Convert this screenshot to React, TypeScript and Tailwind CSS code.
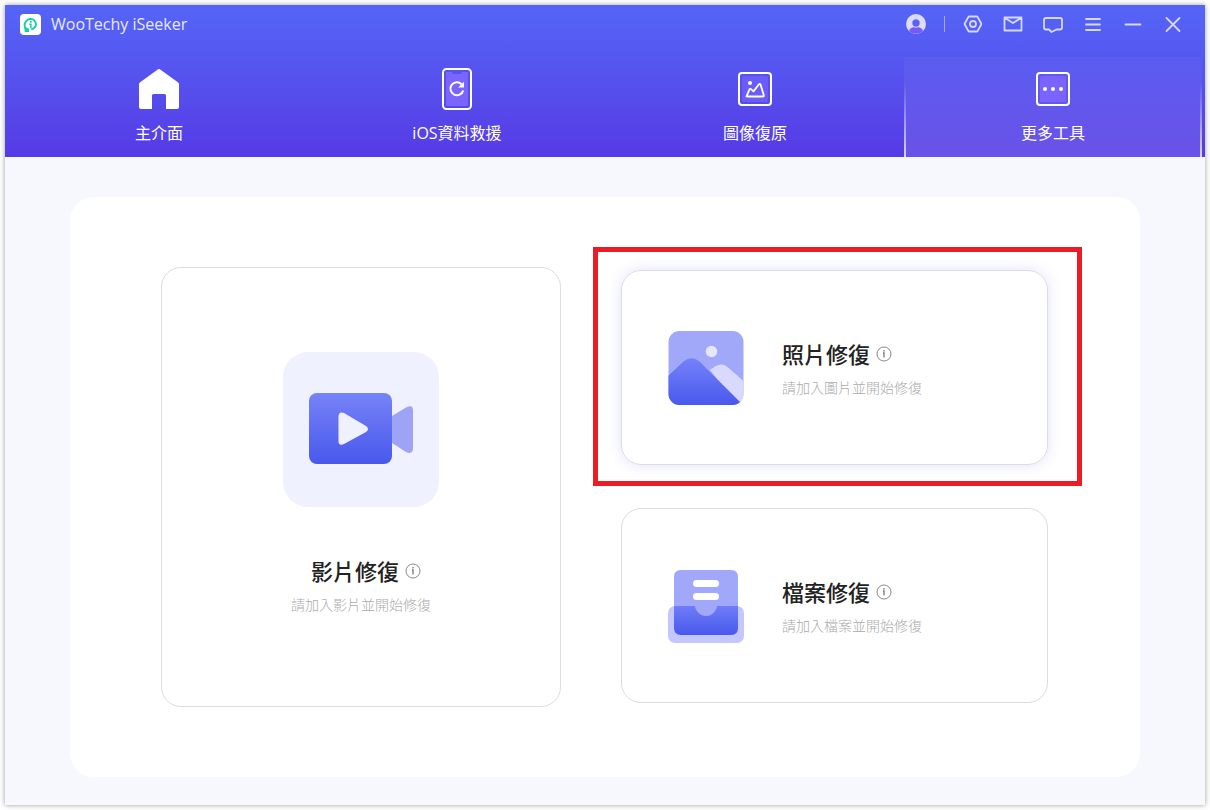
import React, { useState } from 'react';

interface Tab {
    id: string;
    label: string;
    icon: React.ReactNode;
}

interface ToolTextProps {
    title: string;
    description: string;
    centered?: boolean;
}

const LogoIcon = () => (
    <svg viewBox="0 0 21 21" className="w-[21px] h-[21px]" aria-hidden="true">
        <rect width="21" height="21" rx="4" fill="#fff" />
        <path d="M6.200 15.500C4.400 13 4.200 9.500 6 7.300 8 4.700 12 4.200 14.200 6.300c2.200 2.200 2.200 5.700.2 7.500-.9.900-2 1.300-3.200 1.400" fill="none" stroke="#16cfa6" strokeWidth="1.900" />
        <path d="M4.300 12.500l4.700 2.300v3.200l-4.200.2z" fill="#16cfa6" />
        <circle cx="10.900" cy="7.800" r="1" fill="#16cfa6" />
        <path d="M9.200 10.200h1.700v4" fill="none" stroke="#16cfa6" strokeWidth="1.500" />
    </svg>
);

const HomeIcon = () => (
    <svg viewBox="0 0 40 40" className="w-10 h-10" aria-hidden="true">
        <path d="M18.400.7Q20-.6 21.600.7L39.200 13.600Q40 14.200 40 15.200V38q0 2-2 2H27V26.500q0-1.500-1.500-1.500h-11q-1.500 0-1.500 1.500V40H2q-2 0-2-2V15.200Q0 14.200.8 13.600z" fill="#fff" />
    </svg>
);

const PhoneIcon = () => (
    <svg viewBox="0 0 30 42" className="w-[30px] h-[42px]" aria-hidden="true">
        <rect x="1" y="1" width="28" height="40" rx="3.500" fill="none" stroke="#fff" strokeWidth="2" />
        <path d="M5 4h5l1 2h8l1-2h5q1 0 1 1v32q0 1-1 1H5q-1 0-1-1V5q0-1 1-1z" fill="#7a66ff" />
        <path d="M19.600 16.200A6.500 6.500 0 1 0 21.200 22.400" fill="none" stroke="#fff" strokeWidth="2" />
        <path d="M22 13.800v5.700h-5.800z" fill="#fff" />
    </svg>
);

const ImageIcon = () => (
    <svg viewBox="0 0 34 34" className="w-[34px] h-[34px]" aria-hidden="true">
        <rect x="1" y="1" width="32" height="32" rx="3" fill="none" stroke="#fff" strokeWidth="2" />
        <rect x="4" y="4" width="26" height="26" rx="1.500" fill="#6c5cfb" />
        <circle cx="12" cy="11" r="2" fill="#fff" />
        <path d="M8.500 24.300L11.500 17.300Q12 16.300 13 17.200L15.500 19.400 20.800 12.500Q21.900 11.300 22.600 12.800L25.800 23.200Q26 24.500 24.800 24.500H9z" fill="none" stroke="#fff" strokeWidth="1.800" strokeLinejoin="round" />
    </svg>
);

const MoreIcon = () => (
    <svg viewBox="0 0 34 34" className="w-[34px] h-[34px]" aria-hidden="true">
        <rect x="1" y="1" width="32" height="32" rx="3" fill="none" stroke="#fff" strokeWidth="2" />
        <rect x="4" y="4" width="26" height="26" rx="1.500" fill="#7b63ff" />
        <circle cx="9" cy="17" r="2" fill="#fff" />
        <circle cx="17" cy="17" r="2" fill="#fff" />
        <circle cx="25" cy="17" r="2" fill="#fff" />
    </svg>
);

const VideoArt = () => (
    <svg viewBox="0 0 156 155" className="w-[156px] h-[155px]" aria-hidden="true">
        <defs>
            <linearGradient id="video" x1="0" y1="0" x2="0" y2="1">
                <stop offset="0" stopColor="#7783f7" />
                <stop offset="1" stopColor="#4858ec" />
            </linearGradient>
        </defs>
        <rect width="156" height="155" rx="25" fill="#eff1ff" />
        <path d="M109 64l14-8.500q7-3.500 7 3V96q0 7-7 4l-14-9z" fill="#9da4f6" />
        <rect x="26" y="41" width="83" height="71" rx="8" fill="url(#video)" />
        <path d="M55.500 65q0-6 5.500-4l22 13q4 3 0 6L61 92q-5.500 2.500-5.500-3z" fill="#eff1ff" />
    </svg>
);

const PhotoArt = () => (
    <svg viewBox="0 0 76 76" className="w-[76px] h-[76px]" aria-hidden="true">
        <defs>
            <linearGradient id="hill" x1="0" y1="0" x2="0" y2="1">
                <stop offset="0" stopColor="#7582fb" />
                <stop offset="1" stopColor="#4858ec" />
            </linearGradient>
            <clipPath id="frame">
                <rect x="0.500" y="1" width="75" height="74" rx="11" />
            </clipPath>
        </defs>
        <g clipPath="url(#frame)">
            <rect width="76" height="76" fill="#a2a8f9" />
            <path d="M42 40l5-3.500q7-4 12.500.5L76 51.500V76H70z" fill="#d9d9ff" />
            <path d="M0 46l15.500-14.500q8-6.500 16 0L73 73v3H0z" fill="url(#hill)" />
            <circle cx="43.500" cy="21.500" r="5.800" fill="#e6e6ff" />
        </g>
    </svg>
);

const FileArt = () => (
    <svg viewBox="0 0 76 76" className="w-[76px] h-[76px]" aria-hidden="true">
        <defs>
            <linearGradient id="tray" x1="0" y1="0" x2="0" y2="1">
                <stop offset="0" stopColor="#707df8" />
                <stop offset="1" stopColor="#4858ec" />
            </linearGradient>
        </defs>
        <rect x="0" y="38" width="76" height="37" rx="7" fill="#c3c7fe" />
        <path d="M6 38V9q0-7 7-7h50q7 0 7 7v29z" fill="#a2a8f9" />
        <path d="M6 38h64v22q0 7-7 7H13q-7 0-7-7z" fill="url(#tray)" />
        <path d="M27 37h22c0 6-5 11-11 11S27 43 27 37z" fill="#a2a8f9" />
        <rect x="25" y="12" width="26" height="7" rx="3.500" fill="#fff" />
        <rect x="25" y="25" width="26" height="7" rx="3.500" fill="#fff" />
    </svg>
);

const tabs: Tab[] = [
    { id: 'home', label: '主介面', icon: <HomeIcon /> },
    { id: 'ios', label: 'iOS資料救援', icon: <PhoneIcon /> },
    { id: 'image', label: '圖像復原', icon: <ImageIcon /> },
    { id: 'more', label: '更多工具', icon: <MoreIcon /> },
];

const windowActions = [
    {
        label: '設定',
        icon: (
            <>
                <path d="M6.300 2.500h7.400q.6 0 .9.500l3.500 6.200q.4.800 0 1.600L14.600 17q-.3.500-.9.500H6.300q-.6 0-.9-.5L1.900 10.800q-.4-.8 0-1.600L5.400 3q.3-.5.900-.5z" />
                <circle cx="10" cy="10" r="3" />
            </>
        ),
    },
    { label: '郵件', icon: <path d="M1.500 3.500h17v13h-17zM2 4l8 5 8-5" strokeLinejoin="round" /> },
    { label: '意見回饋', icon: <path d="M3 4h14q2 0 2 2v7.500q0 2-2 2h-3.500L8.500 18 6 15.500H3q-2 0-2-2V6q0-2 2-2z" strokeLinejoin="round" /> },
    { label: '選單', icon: <path d="M3 5h14M3 10.500h14M3 16h14" strokeLinecap="round" /> },
    { label: '最小化', icon: <path d="M2.500 10.500h15" strokeLinecap="round" /> },
    { label: '關閉', icon: <path d="M3.500 4l13 13M16.500 4l-13 13" strokeLinecap="round" /> },
];

const ToolText: React.FC<ToolTextProps> = ({ title, description, centered = false }) => (
    <div className={centered ? 'flex flex-col items-center' : 'flex flex-col items-start'}>
        <div className={`flex items-center gap-1.5 ${centered ? 'pl-2.5' : ''}`}>
            <h2 className="text-[22px] leading-8 font-medium text-[#222]">{title}</h2>
            <button type="button" aria-label={`${title}說明`} className="cursor-pointer">
                <svg viewBox="0 0 16 16" className="w-4 h-4" aria-hidden="true">
                    <circle cx="8" cy="8" r="7" fill="none" stroke="#888" strokeWidth="1" />
                    <path d="M8 4v1.500M7 7h1v4.500" fill="none" stroke="#777" strokeWidth="1.300" />
                </svg>
            </button>
        </div>
        <p className="mt-2 text-sm leading-5 font-light text-[#aaa]">{description}</p>
    </div>
);

const App: React.FC = () => {
    const [activeTab, setActiveTab] = useState('more');

    return (
        <div className="min-h-screen flex bg-white p-[5px] font-['Open_Sans','Noto_Sans_CJK_TC',sans-serif]">
            <div className="flex-1 flex flex-col bg-[#f7f8fe] shadow-[0_0_5px_rgba(0,0,0,0.4)]">
                <header className="bg-gradient-to-b from-[#5465f6] to-[#563ae5] text-white">
                    <div className="flex items-center justify-between h-[38px] pl-[15px] pr-[22px]">
                        <div className="flex items-center gap-2.5">
                            <LogoIcon />
                            <h1 className="text-base leading-6 text-[#e8e9ff]">WooTechy iSeeker</h1>
                        </div>
                        <div className="flex items-center">
                            <button type="button" aria-label="帳戶" className="mr-[18px] cursor-pointer">
                                <svg viewBox="0 0 20 20" className="w-5 h-5" aria-hidden="true">
                                    <circle cx="10" cy="10" r="10" fill="#dcdcff" />
                                    <path d="M3 17q1-4 7-4t7 4a10 10 0 0 1-14 0z" fill="#7659fb" />
                                    <circle cx="10" cy="9" r="4.200" fill="#5b61f5" stroke="#dcdcff" strokeWidth="1" />
                                </svg>
                            </button>
                            <span className="w-px h-4 mr-[18px] bg-[#a3a7fa]" />
                            <div className="flex items-center gap-5">
                                {windowActions.map((action) => (
                                    <button key={action.label} type="button" aria-label={action.label} className="cursor-pointer">
                                        <svg viewBox="0 0 20 20" className="w-5 h-5" fill="none" stroke="#d5d7ff" strokeWidth="1.800" aria-hidden="true">
                                            {action.icon}
                                        </svg>
                                    </button>
                                ))}
                            </div>
                        </div>
                    </div>

                    <nav className="grid grid-cols-4 pl-[5px] pr-[3px] pt-3.5">
                        {tabs.map((tab) => (
                            <button
                                key={tab.id}
                                type="button"
                                onClick={() => setActiveTab(tab.id)}
                                className={`flex h-[100px] cursor-pointer ${activeTab === tab.id ? 'bg-gradient-to-b from-white/3 to-white/12' : ''}`}
                            >
                                {activeTab === tab.id && <span className="w-0.5 h-full bg-gradient-to-b from-transparent from-25% to-white/75" />}
                                <span className="flex-1 flex flex-col items-center pt-2.5">
                                    <span className="flex items-center justify-center h-11">{tab.icon}</span>
                                    <span className="mt-2.5 text-base leading-6">{tab.label}</span>
                                </span>
                                {activeTab === tab.id && <span className="w-0.5 h-full bg-gradient-to-b from-transparent from-25% to-white/75" />}
                            </button>
                        ))}
                    </nav>
                </header>

                <main className="flex-1 flex px-[65px] pt-10 pb-7">
                    <div className="flex-1 grid grid-cols-[400fr_427fr] gap-15 bg-white rounded-3xl pl-[91px] pr-[92px] py-[70px]">
                        <section className="flex flex-col items-center gap-12 pt-21 border border-[#dcdcdf] rounded-[20px]">
                            <VideoArt />
                            <ToolText title="影片修復" description="請加入影片並開始修復" centered />
                        </section>

                        <div className="flex flex-col gap-[43px] pt-[3px] pb-1">
                            <section className="relative flex-1 flex items-center gap-[38px] pl-[46px] border border-[#dcdce4] rounded-[20px] shadow-[0_0_14px_rgba(90,90,240,0.18)]">
                                <PhotoArt />
                                <ToolText title="照片修復" description="請加入圖片並開始修復" />
                                <span className="absolute -top-6 -bottom-[22px] -left-[29px] -right-[35px] border-5 border-[#ed1c24] pointer-events-none" />
                            </section>
                            <section className="flex-1 flex items-center gap-[38px] pl-[46px] border border-[#dcdcdf] rounded-[20px]">
                                <FileArt />
                                <ToolText title="檔案修復" description="請加入檔案並開始修復" />
                            </section>
                        </div>
                    </div>
                </main>
            </div>
        </div>
    );
};

export default App;
